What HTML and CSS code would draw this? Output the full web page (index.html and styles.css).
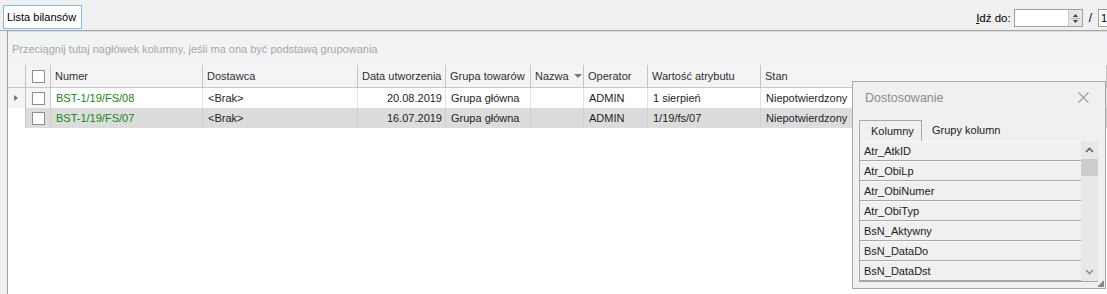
FILE: index.html
```html
<!DOCTYPE html>
<html lang="pl">
<head>
    <meta charset="UTF-8">
    <title>Lista bilansów</title>
    <link rel="stylesheet" href="styles.css">
</head>
<body>
    <div class="topbar">
        <div class="page-tab">Lista bilansów</div>
        <div class="goto">
            <span class="goto-label"><u>I</u>dź do:</span>
            <div class="spin-input">
                <div class="spin-field"></div>
                <div class="spin-btns">
                    <svg width="11" height="15" viewBox="0 0 11 15">
                        <path d="M3 6 L5.5 3 L8 6 Z" fill="#404040"/>
                        <line x1="1" y1="7.5" x2="10" y2="7.5" stroke="#b0b0b0"/>
                        <path d="M3 9 L5.5 12 L8 9 Z" fill="#404040"/>
                    </svg>
                </div>
            </div>
            <span class="slash">/</span>
            <div class="page-total">1</div>
        </div>
    </div>

    <div class="main">
        <div class="group-panel">Przeciągnij tutaj nagłówek kolumny, jeśli ma ona być podstawą grupowania</div>

        <div class="grid">
            <div class="row head">
                <div class="cell ind"></div>
                <div class="cell chk"><span class="box"></span></div>
                <div class="cell">Numer</div>
                <div class="cell">Dostawca</div>
                <div class="cell">Data utworzenia</div>
                <div class="cell">Grupa towarów</div>
                <div class="cell">Nazwa <span class="sort"></span></div>
                <div class="cell">Operator</div>
                <div class="cell">Wartość atrybutu</div>
                <div class="cell">Stan</div>
            </div>
            <div class="row data current">
                <div class="cell ind"><span class="arrow"></span></div>
                <div class="cell chk"><span class="box"></span></div>
                <div class="cell num">BST-1/19/FS/08</div>
                <div class="cell">&lt;Brak&gt;</div>
                <div class="cell right">20.08.2019</div>
                <div class="cell">Grupa główna</div>
                <div class="cell"></div>
                <div class="cell">ADMIN</div>
                <div class="cell">1 sierpień</div>
                <div class="cell">Niepotwierdzony</div>
            </div>
            <div class="row data selected">
                <div class="cell ind"></div>
                <div class="cell chk"><span class="box"></span></div>
                <div class="cell num">BST-1/19/FS/07</div>
                <div class="cell">&lt;Brak&gt;</div>
                <div class="cell right">16.07.2019</div>
                <div class="cell">Grupa główna</div>
                <div class="cell"></div>
                <div class="cell">ADMIN</div>
                <div class="cell">1/19/fs/07</div>
                <div class="cell">Niepotwierdzony</div>
            </div>
        </div>

        <div class="customize">
            <div class="cz-title">
                <span>Dostosowanie</span>
                <svg class="cz-close" width="11" height="11" viewBox="0 0 11 11">
                    <path d="M0.5 0.5 L10.5 10.5 M10.5 0.5 L0.5 10.5" stroke="#a0a0a0" stroke-width="1.1"/>
                </svg>
            </div>
            <div class="cz-tabs">
                <div class="cz-tab active">Kolumny</div>
                <div class="cz-tab">Grupy kolumn</div>
            </div>
            <div class="cz-list">
                <div class="cz-items">
                    <div class="cz-item">Atr_AtkID</div>
                    <div class="cz-item">Atr_ObiLp</div>
                    <div class="cz-item">Atr_ObiNumer</div>
                    <div class="cz-item">Atr_ObiTyp</div>
                    <div class="cz-item">BsN_Aktywny</div>
                    <div class="cz-item">BsN_DataDo</div>
                    <div class="cz-item">BsN_DataDst</div>
                </div>
                <div class="cz-scroll">
                    <svg width="17" height="18" viewBox="0 0 17 18">
                        <path d="M5 11 L8.5 7.5 L12 11" stroke="#606060" stroke-width="1.6" fill="none"/>
                    </svg>
                    <div class="cz-thumb"></div>
                    <div class="cz-track"></div>
                    <svg width="17" height="18" viewBox="0 0 17 18">
                        <path d="M5 7 L8.5 10.5 L12 7" stroke="#909090" stroke-width="1.6" fill="none"/>
                    </svg>
                </div>
            </div>
            <svg class="grip" width="6" height="6" viewBox="0 0 6 6">
                <rect x="4" y="0" width="2" height="2" fill="#8a8a8a"/>
                <rect x="2" y="2" width="2" height="2" fill="#8a8a8a"/>
                <rect x="4" y="2" width="2" height="2" fill="#8a8a8a"/>
                <rect x="0" y="4" width="2" height="2" fill="#8a8a8a"/>
                <rect x="2" y="4" width="2" height="2" fill="#8a8a8a"/>
                <rect x="4" y="4" width="2" height="2" fill="#8a8a8a"/>
            </svg>
        </div>
    </div>
</body>
</html>
```

FILE: styles.css
```css
body {
    margin: 0;
    width: 1107px;
    height: 294px;
    overflow: hidden;
    background: #f0f0f0;
    font-family: "Liberation Sans", Arial, sans-serif;
    font-size: 11px;
    color: #1e1e1e;
}

/* top bar */
.topbar {
    display: flex;
    justify-content: space-between;
    align-items: flex-start;
    border-bottom: 1px solid #a8a8a8;
    box-sizing: border-box;
    height: 31px;
}
.page-tab {
    margin: 5px 0 0 3px;
    height: 24px;
    box-sizing: border-box;
    padding: 0 5px 0 3px;
    background: #fff;
    border: 1px solid #86bdf0;
    line-height: 22px;
    font-size: 11px;
    color: #000;
}
.goto {
    display: flex;
    align-items: center;
    margin-top: 9px;
    margin-right: -12px;
    white-space: nowrap;
}
.goto-label {
    font-size: 11.5px;
    color: #000;
    margin-right: 3px;
}
.spin-input {
    display: flex;
    width: 69px;
    height: 18px;
    box-sizing: border-box;
    border: 1px solid #a0a0a0;
    background: #fff;
}
.spin-field {
    flex: 1;
}
.spin-btns {
    width: 13px;
    border-left: 1px solid #c8c8c8;
    background: #e6e6e6;
    display: flex;
    align-items: center;
    justify-content: center;
}
.slash {
    margin: 0 6px 0 6px;
    font-size: 12px;
    color: #000;
}
.page-total {
    width: 21px;
    height: 18px;
    box-sizing: border-box;
    border: 1px solid #a0a0a0;
    background: #fff;
    padding-left: 2px;
    line-height: 16px;
    color: #000;
}

/* main grid area */
.main {
    position: relative;
    margin-left: 7px;
    height: 263px;
    border-left: 1px solid #a0a0a0;
    background: #fff;
}
.group-panel {
    height: 34px;
    box-sizing: border-box;
    border-top: 1px solid #dcdcdc;
    background: #f2f3f5;
    color: #a8a8a8;
    padding: 11px 0 0 4px;
}

.row {
    display: grid;
    grid-template-columns: 18px 25px 152px 155px 88px 85px 53px 64px 113px 1fr;
    height: 20px;
}
.row.head {
    height: 22px;
    background: #f4f4f5;
    border-bottom: 1px solid #c8c8c8;
    color: #303030;
}
.cell {
    padding: 0 4px 0 5px;
    display: flex;
    align-items: center;
    white-space: nowrap;
    overflow: hidden;
    border-right: 1px solid #e2e2e2;
}
.head .cell {
    border-right: 1px solid #c4c4c4;
    padding-left: 4px;
}
.cell.ind {
    padding: 0;
    background: #f4f4f5;
    border-right: 1px solid #c4c4c4;
    justify-content: center;
}
.cell.chk {
    padding: 0;
    justify-content: center;
    border-right: 1px solid #c4c4c4;
}
.cell.right {
    justify-content: flex-end;
    padding-right: 3px;
}
.cell.num {
    color: #118811;
}
.row.current {
    background: #fff;
}
.row.current .cell.chk {
    background: #f4f4f5;
}
.row.selected {
    background: #dcdcdc;
}
.row.selected .cell {
    border-right-color: #d0d0d0;
}
.row.selected .cell.ind {
    background: #fff;
    border-right-color: #c4c4c4;
}
.box {
    width: 11px;
    height: 11px;
    border: 1px solid #8e8e8e;
    background: #fff;
}
.arrow {
    width: 0;
    height: 0;
    border-top: 3px solid transparent;
    border-bottom: 3px solid transparent;
    border-left: 4px solid #777;
    margin-left: -1px;
}
.sort {
    margin-left: 5px;
    width: 0;
    height: 0;
    border-left: 4px solid transparent;
    border-right: 4px solid transparent;
    border-top: 4px solid #7a7a7a;
}

/* floating customization window */
.customize {
    position: absolute;
    left: 844px;
    top: 50px;
    width: 254px;
    height: 208px;
    box-sizing: border-box;
    background: #f0f0f0;
    border: 1px solid #a8a8a8;
    padding: 0 7px 0 6px;
}
.cz-title {
    height: 31px;
    display: flex;
    align-items: center;
    justify-content: space-between;
    padding: 0 10px 0 6px;
    font-size: 12.5px;
    color: #8c8c8c;
}
.cz-close {
    margin-right: -1px;
}
.cz-tabs {
    display: flex;
    margin-top: 7px;
    height: 21px;
}
.cz-tab {
    padding: 0 10px;
    line-height: 21px;
    color: #202020;
}
.cz-tab.active {
    background: #f0f0f0;
    border: 1px solid #a8a8a8;
    border-bottom: none;
    padding: 0 10px 0 11px;
    width: 63px;
    box-sizing: border-box;
}
.cz-list {
    display: flex;
    height: 140px;
    border: 1px solid #a8a8a8;
    border-top: none;
    border-right: none;
}
.cz-items {
    flex: 1;
}
.cz-item {
    height: 20px;
    box-sizing: border-box;
    border-bottom: 1px solid #a8a8a8;
    border-top: 1px solid #fafafa;
    padding-left: 4px;
    line-height: 18px;
    color: #202020;
}
.cz-scroll {
    width: 17px;
    background: #e8e8e8;
    display: flex;
    flex-direction: column;
}
.cz-thumb {
    height: 17px;
    background: #cdcdcd;
}
.cz-track {
    flex: 1;
}
.grip {
    position: absolute;
    right: 1px;
    bottom: 1px;
}
```
